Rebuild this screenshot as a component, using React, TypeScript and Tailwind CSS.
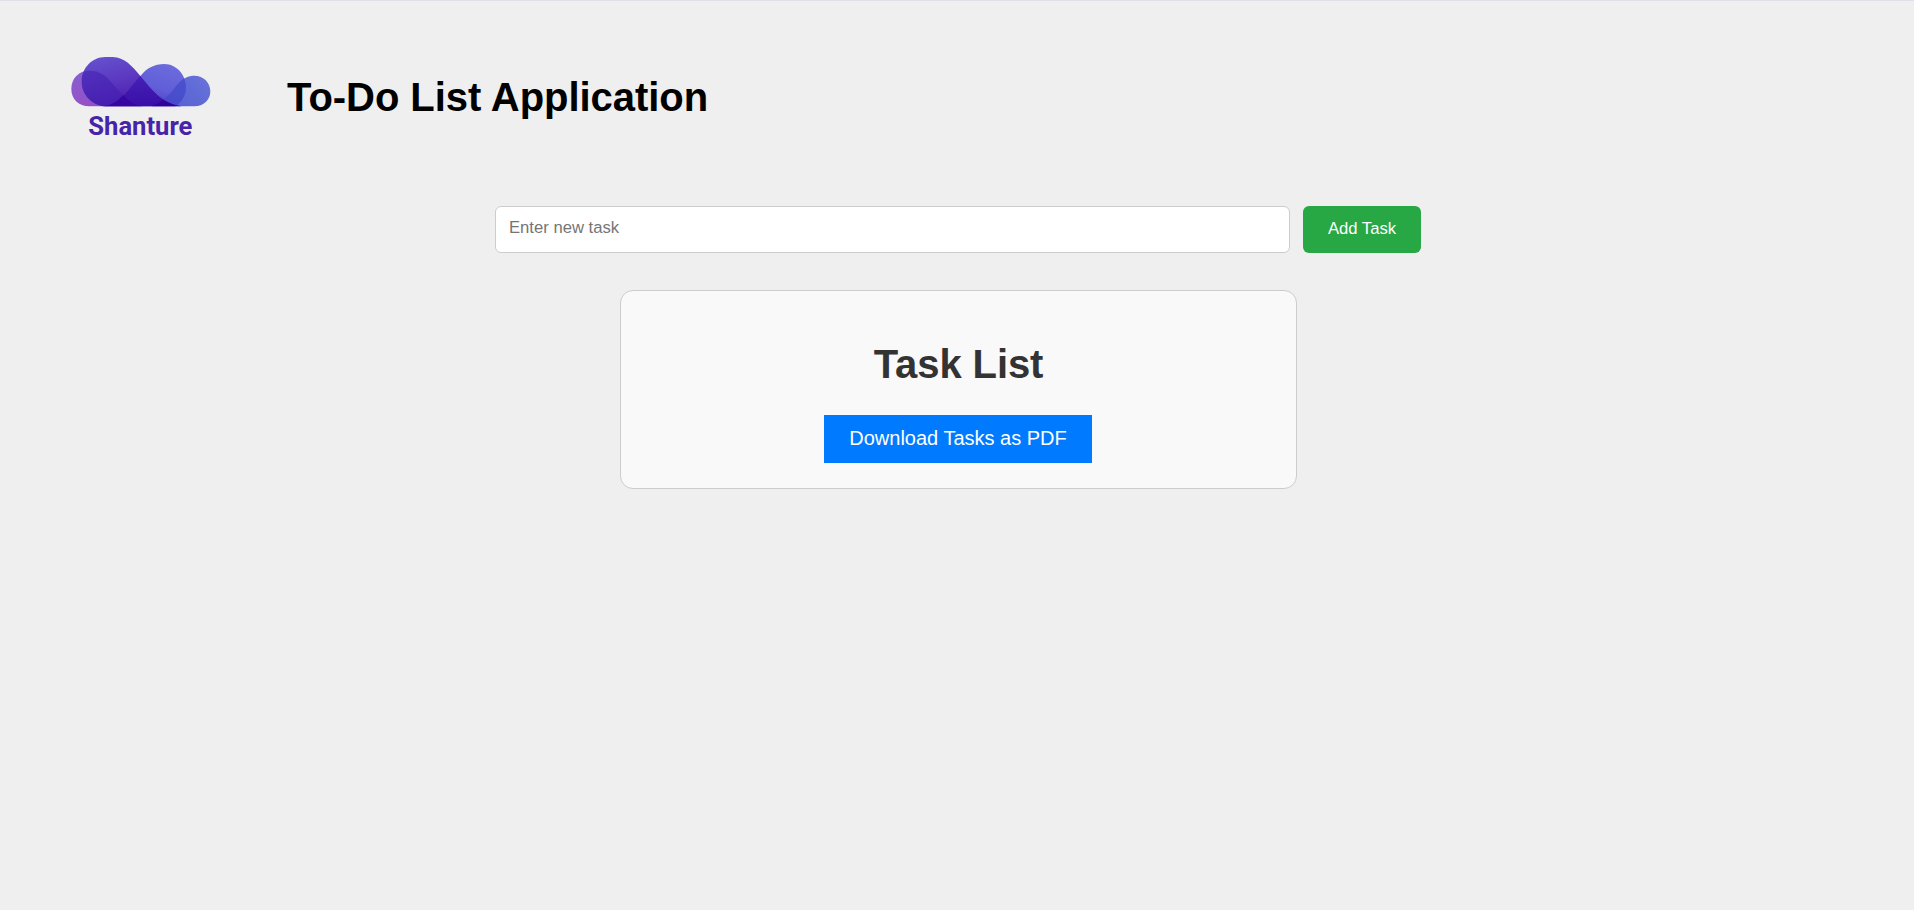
function Logo() {
  return (
    <svg viewBox="0 0 480 330" className="h-[110px] w-[160px] shrink-0" role="img" aria-label="Shanture">
      <defs>
        <linearGradient id="left" x1="60" y1="92" x2="100" y2="199" gradientUnits="userSpaceOnUse">
          <stop offset="0" stopColor="#8a5fce" />
          <stop offset="1" stopColor="#9450c6" />
        </linearGradient>
        <linearGradient id="big" x1="130" y1="51" x2="165" y2="200" gradientUnits="userSpaceOnUse">
          <stop offset="0" stopColor="#6450ce" />
          <stop offset="0.5" stopColor="#5c38c0" />
          <stop offset="1" stopColor="#4c1cae" />
        </linearGradient>
        <linearGradient id="middle" x1="310" y1="72" x2="270" y2="200" gradientUnits="userSpaceOnUse">
          <stop offset="0" stopColor="#6b6bdc" />
          <stop offset="0.55" stopColor="#615ed8" />
          <stop offset="1" stopColor="#4a38c2" />
        </linearGradient>
        <linearGradient id="right" x1="430" y1="108" x2="340" y2="200" gradientUnits="userSpaceOnUse">
          <stop offset="0" stopColor="#6872da" />
          <stop offset="1" stopColor="#5660d2" />
        </linearGradient>
        <linearGradient id="valley" x1="240" y1="108" x2="240" y2="200" gradientUnits="userSpaceOnUse">
          <stop offset="0" stopColor="#4421b6" />
          <stop offset="1" stopColor="#3a0ea8" />
        </linearGradient>
        <clipPath id="bigClip">
          <path d="M130 199C92 192 65 163 65 124C65 84 96 51 136 51H158C194 52 216 78 241 108C276 150 310 199 378 199Z" />
        </clipPath>
        <clipPath id="middleClip">
          <path d="M130 199C186 191 207 142 242 107C261 84 283 72 313 72C350 72 378 105 378 142C378 170 362 190 345 199Z" />
        </clipPath>
      </defs>
      <path d="M88 92C56 92 34 115 34 147C34 178 56 199 88 199H255C215 198 180 157 150 122C132 101 113 92 88 92Z" fill="url(#left)" />
      <path d="M275 199C309 188 335 155 354 131C370 114 385 107 403 107C431 107 451 128 451 154C451 180 431 199 403 199Z" fill="url(#right)" />
      <path d="M130 199C186 191 207 142 242 107C261 84 283 72 313 72C350 72 378 105 378 142C378 170 362 190 345 199Z" fill="url(#middle)" />
      <path d="M275 199C309 188 335 155 354 131C370 114 385 107 403 107C431 107 451 128 451 154C451 180 431 199 403 199Z" fill="#444bcb" fillOpacity="0.8" clipPath="url(#middleClip)" />
      <path d="M130 199C92 192 65 163 65 124C65 84 96 51 136 51H158C194 52 216 78 241 108C276 150 310 199 378 199Z" fill="url(#big)" />
      <g clipPath="url(#bigClip)">
        <path d="M88 92C56 92 34 115 34 147C34 178 56 199 88 199H255C215 198 180 157 150 122C132 101 113 92 88 92Z" fill="#421eb0" fillOpacity="0.55" />
        <path d="M130 199C186 191 207 142 242 107C261 84 283 72 313 72C354 72 378 105 378 146C378 174 362 190 345 199Z" fill="url(#valley)" />
        <path d="M130 199C157 196 175 181 190 164C207 184 225 199 255 199Z" fill="#34009c" fillOpacity="0.6" />
        <path d="M275 199C290 194 303 185 314 174L378 199Z" fill="#2d0092" fillOpacity="0.7" />
      </g>
      <text
        x="85"
        y="284"
        textLength="312"
        lengthAdjust="spacingAndGlyphs"
        className="fill-[#4623a9] font-['Roboto',sans-serif] text-[78px] font-bold"
      >
        Shanture
      </text>
    </svg>
  );
}

export default function App() {
  return (
    <div className="min-h-screen border-t border-[#e1dfe9] bg-[#efefef] font-['Liberation_Sans',Arial,sans-serif]">
      <header className="flex items-center gap-[67px] pt-[39px] pl-[60px]">
        <Logo />
        <h1 className="pt-1 text-[40px] leading-[46px] font-bold tracking-[-0.05px] text-black">To-Do List Application</h1>
      </header>
      <main>
        <form className="mt-14 ml-[495px] flex gap-[13px]" onSubmit={(e) => e.preventDefault()}>
          <input
            type="text"
            placeholder="Enter new task"
            className="h-[47px] w-[795px] rounded-md border border-[#ccc] bg-white px-[13px] pb-[3px] text-[16.67px] text-black outline-none placeholder:text-[#757575]"
          />
          <button type="submit" className="h-[47px] w-[118px] rounded-md bg-[#28a745] pb-[3px] text-[16.67px] text-white">
            Add Task
          </button>
        </form>
        <section className="mt-[37px] ml-[620px] flex h-[199px] w-[677px] flex-col items-center rounded-[13px] border border-[#ccc] bg-[#f9f9f9] pt-[50px] pr-px">
          <h2 className="pl-px text-[40px] leading-[46px] font-bold tracking-[-0.1px] text-[#333]">Task List</h2>
          <button type="button" className="mt-7 h-12 w-[268px] bg-[#007bff] pb-[3px] text-[20px] text-white">
            Download Tasks as PDF
          </button>
        </section>
      </main>
    </div>
  );
}
